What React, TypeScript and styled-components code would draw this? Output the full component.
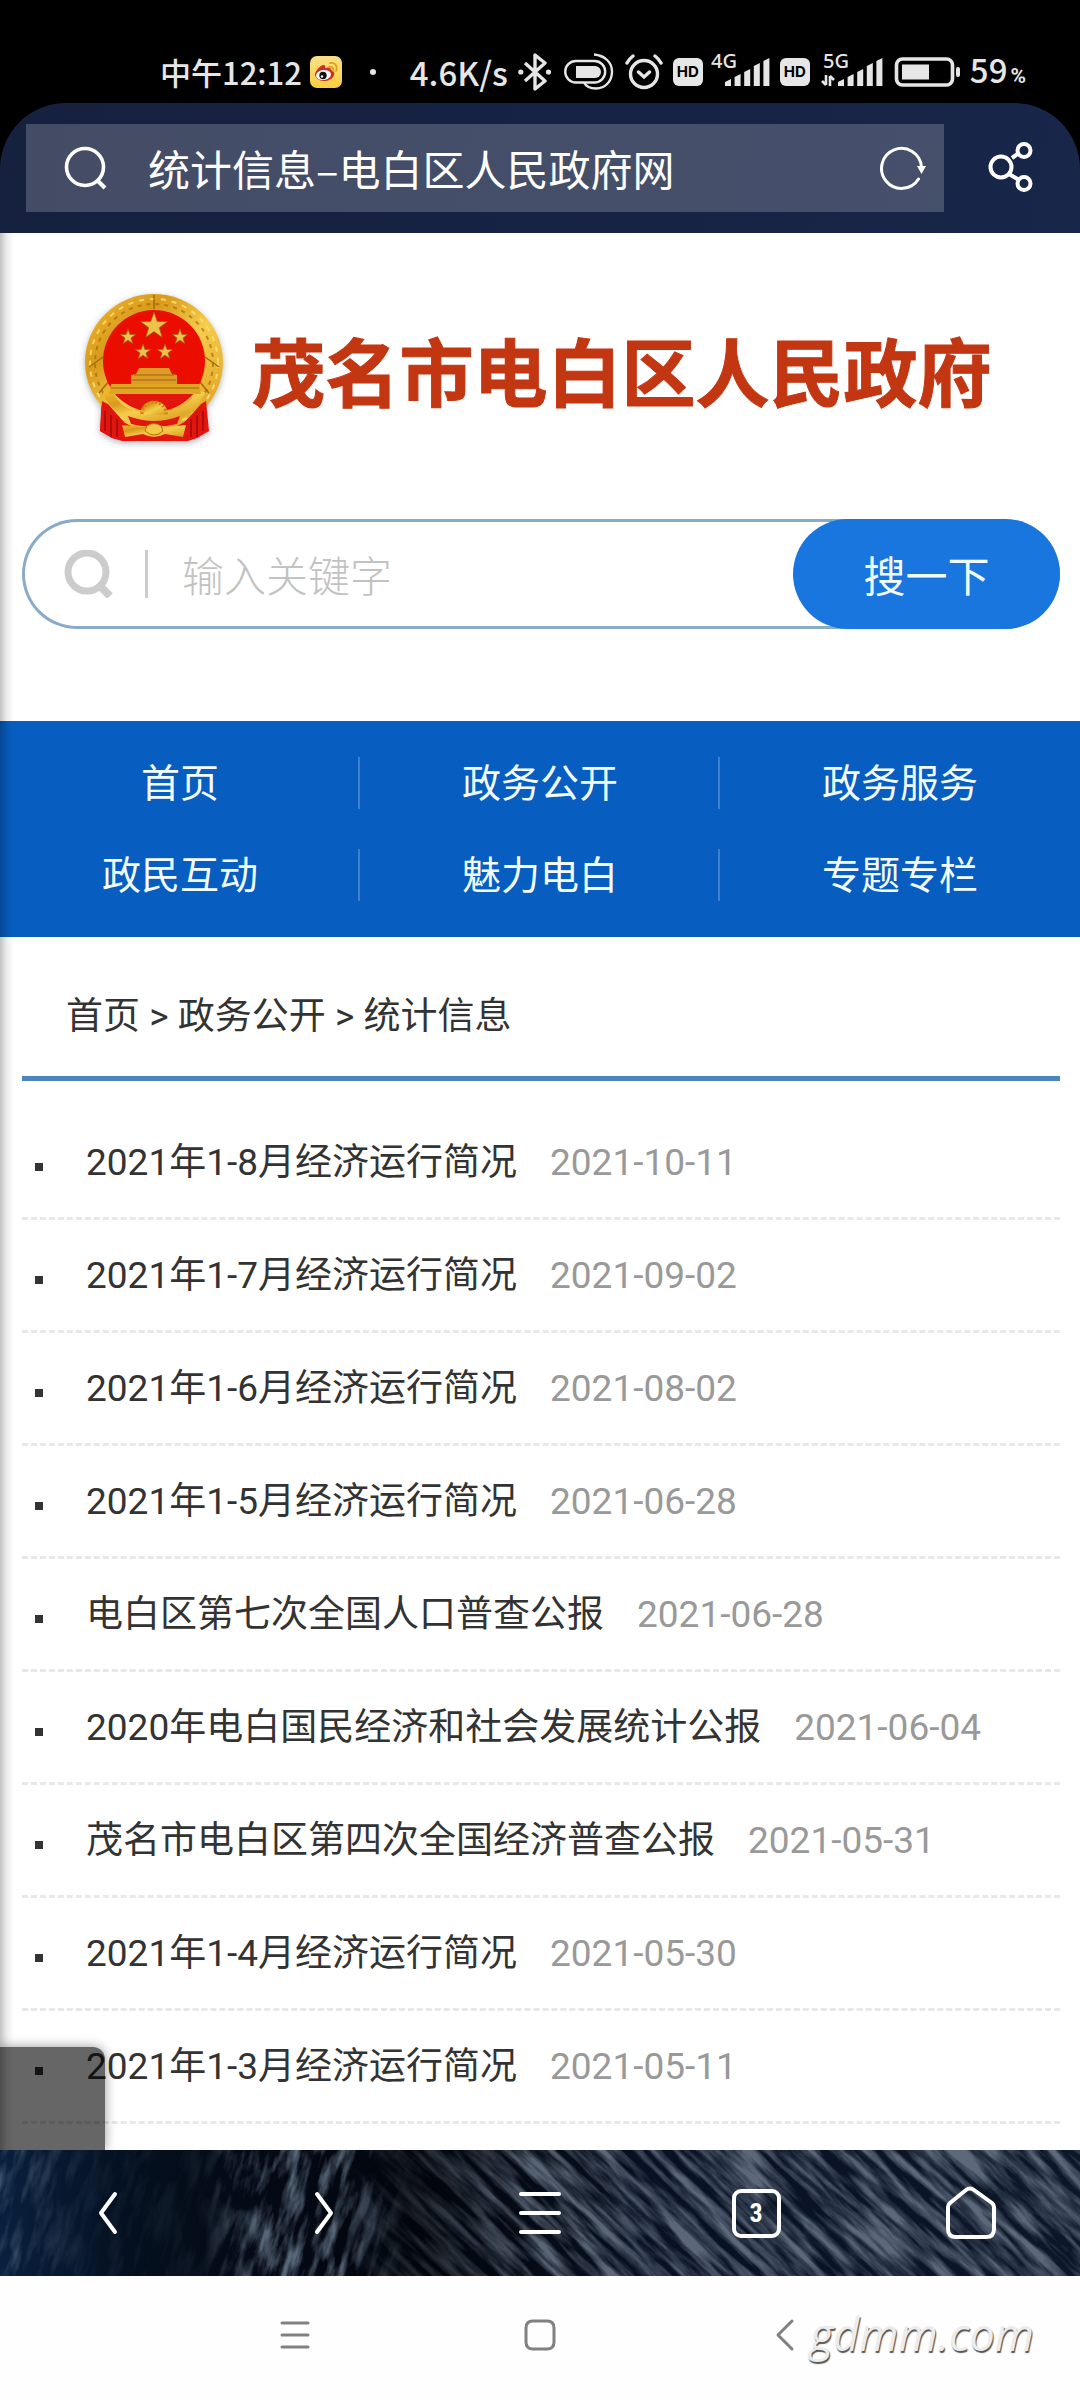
import React from "react";
import styled, { createGlobalStyle } from "styled-components";

const CJK = `"Noto Sans CJK SC", sans-serif`;
const MIXED = `Roboto, "Noto Sans CJK SC", sans-serif`;
const ICON = "#e6e6e6";

const GlobalStyle = createGlobalStyle`
  *, *::before, *::after { box-sizing: border-box; }
  body { margin: 0; background: #fff; font-family: ${MIXED}; }
  button, input { font: inherit; border: 0; margin: 0; padding: 0; background: none; color: inherit; }
  a { color: inherit; text-decoration: none; }
  svg { display: block; flex: none; }
`;

const Screen = styled.div`
  display: flex;
  flex-direction: column;
`;

/* ---------- status bar ---------- */

const StatusBar = styled.header`
  display: flex;
  align-items: center;
  justify-content: space-between;
  height: 103px;
  padding: 41px 54px 0 160px;
  background: #000;
  color: ${ICON};
  font-family: ${CJK};
  font-weight: 500;
  line-height: 60px;
`;

const StatusGroup = styled.div<{ $gap: number }>`
  display: flex;
  align-items: center;
  gap: ${(p) => p.$gap}px;
  white-space: nowrap;
`;

const Clock = styled.time`
  font-size: 31px;
`;

const Reading = styled.span`
  font-size: 33px;
`;

const Dot = styled.span`
  width: 6px;
  height: 6px;
  margin-left: 20px;
  border-radius: 50%;
  background: ${ICON};
`;

const HdBadge = styled.span`
  width: 30px;
  height: 28px;
  border-radius: 6px;
  background: ${ICON};
  color: #000;
  font-family: Inter, sans-serif;
  font-size: 15px;
  font-weight: 700;
  line-height: 28px;
  text-align: center;
`;

const Percent = styled.small`
  margin-left: 3px;
  font-family: Roboto, sans-serif;
  font-size: 21px;
  font-weight: 700;
`;

/* ---------- browser bar ---------- */

const BrowserTop = styled.div`
  background: #000;
`;

const AddressBar = styled.form`
  display: flex;
  align-items: center;
  height: 130px;
  padding-left: 26px;
  border-radius: 66px 66px 0 0;
  background: linear-gradient(100deg, #16203f, #172345 60%, #182649);
`;

const AddressField = styled.label`
  display: flex;
  flex: 1;
  align-items: center;
  height: 88px;
  padding: 0 17px 0 38px;
  background: rgba(255, 255, 255, 0.2);
`;

const AddressInput = styled.input`
  flex: 1;
  min-width: 0;
  padding-left: 40px;
  color: #fff;
  font-family: ${CJK};
  font-size: 42px;
  line-height: 60px;
`;

const IconButton = styled.button`
  display: flex;
  align-items: center;
  justify-content: center;
`;

const ShareButton = styled(IconButton)`
  width: 136px;
  height: 88px;
`;

/* ---------- web page ---------- */

const Site = styled.div`
  position: relative;
  padding-bottom: 26px;
  background: #fff;
  color: #333;

  &::after {
    content: "";
    position: absolute;
    inset: 0 auto 0 0;
    width: 14px;
    background: linear-gradient(90deg, rgba(0, 0, 0, 0.24), rgba(0, 0, 0, 0.07) 50%, transparent);
    pointer-events: none;
  }
`;

const Masthead = styled.div`
  display: flex;
  align-items: center;
  justify-content: center;
  gap: 21px;
  padding: 54px 12px 0 0;
`;

const SiteName = styled.h1`
  margin: 0;
  padding-top: 2px;
  color: #c33612;
  font-family: ${CJK};
  font-size: 74px;
  font-weight: 700;
  line-height: 100px;
  white-space: nowrap;
  -webkit-text-stroke: 1px #c33612;
`;

const SearchForm = styled.form`
  display: flex;
  height: 110px;
  margin: 70px 20px 92px 22px;
  border-radius: 55px;
  background: #fff;
  box-shadow: inset 0 0 0 3px #8aabc8;
`;

const SearchLabel = styled.label`
  display: flex;
  flex: 1;
  align-items: center;
  padding-left: 42px;
`;

const SearchInput = styled.input`
  flex: 1;
  min-width: 0;
  height: 48px;
  margin-left: 31px;
  padding: 0 0 2px 34px;
  border-left: 3px solid #ccc;
  color: #333;
  font-family: ${CJK};
  font-size: 42px;
  font-weight: 300;

  &::placeholder { color: #c2c2c2; opacity: 1; }
`;

const SearchButton = styled.button`
  width: 267px;
  padding-bottom: 2px;
  border-radius: 55px;
  background: #1976de;
  color: #f0fcff;
  font-family: ${CJK};
  font-size: 42px;
`;

const MainNav = styled.nav`
  display: grid;
  grid-template-columns: repeat(3, 1fr);
  padding: 16px 0;
  background: #075dc0;
`;

const NavLink = styled.a`
  padding: 21px 0 19px;
  color: #f2fcff;
  font-size: 39px;
  line-height: 52px;
  text-align: center;
  background: linear-gradient(#3c80cf, #3c80cf) right center / 2px 52px no-repeat;

  &:nth-child(3n) { background: none; }
`;

const Breadcrumb = styled.nav`
  margin: 0 20px 26px 22px;
  padding: 50px 0 29px 44px;
  border-bottom: 5px solid #4a85bb;
  font-size: 37px;
  line-height: 60px;
`;

const NewsList = styled.ul`
  margin: 0 20px 0 22px;
  padding: 0;
  list-style: none;
`;

const NewsItem = styled.li`
  display: flex;
  align-items: center;
  padding: 26px 0 24px 13px;
  border-bottom: 3px dashed #e8e8e8;
  font-size: 37px;
  line-height: 60px;
  white-space: nowrap;

  &::before {
    content: "";
    width: 8px;
    height: 8px;
    margin: 8px 43px 0 0;
    background: #333;
  }
`;

const NewsDate = styled.time`
  margin-left: 33px;
  color: #999;
`;

const FloatingTab = styled.div`
  position: absolute;
  left: 0;
  bottom: 0;
  width: 105px;
  height: 103px;
  border-radius: 0 12px 0 0;
  background: rgba(0, 0, 0, 0.6);
  box-shadow: 0 0 12px rgba(0, 0, 0, 0.4);
  clip-path: inset(-16px -16px 0 0);
`;

/* ---------- bottom bars ---------- */

const Toolbar = styled.nav`
  position: relative;
  display: grid;
  grid-template-columns: repeat(5, 1fr);
  height: 126px;
  overflow: hidden;
  background: #050d1a;
`;

const Backdrop = styled.svg`
  position: absolute;
  inset: 0;
  width: 100%;
  height: 100%;
`;

const ToolButton = styled(IconButton)`
  position: relative;
`;

const TabCount = styled.span`
  width: 49px;
  height: 49px;
  border: 4px solid #fff;
  border-radius: 9px;
  color: #fff;
  font-family: "Roboto Condensed", Roboto, sans-serif;
  font-size: 26px;
  font-weight: 700;
  line-height: 41px;
  text-align: center;
`;

const SystemBar = styled.nav`
  position: relative;
  display: grid;
  grid-template-columns: repeat(3, 1fr);
  height: 124px;
  padding: 0 16% 6px;
  background: #fefefe;
`;

const Watermark = styled.span`
  position: absolute;
  right: 46px;
  top: 28px;
  color: #ececec;
  font-family: "Open Sans", sans-serif;
  font-size: 45px;
  font-style: italic;
  line-height: 60px;
  text-shadow: 1px 2px 1px #555;
`;

/* ---------- drawings ---------- */

const starPoints = (cx: number, cy: number, r: number) =>
  Array.from({ length: 10 }, (_, i) => {
    const a = (-90 + i * 36) * (Math.PI / 180);
    const d = i % 2 ? r * 0.4 : r;
    return `${(cx + d * Math.cos(a)).toFixed(1)},${(cy + d * Math.sin(a)).toFixed(1)}`;
  }).join(" ");

const WeiboIcon = () => (
  <svg width="32" height="32" viewBox="0 0 32 32">
    <defs>
      <linearGradient id="wb" x1="0" y1="0" x2="0" y2="1">
        <stop offset="0" stopColor="#fbe08a" />
        <stop offset="1" stopColor="#f9cf3f" />
      </linearGradient>
    </defs>
    <rect width="32" height="32" rx="7" fill="url(#wb)" />
    <path d="M5 18c1-4 5-8 8-9 2 0 3 1 2 3 3-1 6-1 6 2 3 1 4 3 3 5-1 4-6 6-10 6-5 0-9-3-9-7z" fill="#cf2f22" />
    <ellipse cx="13.500" cy="19" rx="7.500" ry="5" fill="#fff" transform="rotate(-8 13.500 19)" />
    <circle cx="13" cy="19.500" r="3.700" fill="#111" />
    <circle cx="12" cy="20.500" r="1.200" fill="#fff" />
    <path d="M19 11c3-1 5 1 4 4M20 7c5-1 8 3 6 8" fill="none" stroke="#e0a01c" strokeWidth="1.800" strokeLinecap="round" />
  </svg>
);

const BluetoothIcon = () => (
  <svg width="36" height="38" viewBox="0 0 36 38" fill="none" stroke={ICON} strokeWidth="3.400" strokeLinejoin="round">
    <path d="M7 10l20 18-10 8V2l10 8L7 28" />
    <circle cx="2.800" cy="19" r="2.600" fill={ICON} stroke="none" />
    <circle cx="30.500" cy="19" r="2.600" fill={ICON} stroke="none" />
  </svg>
);

const CapsuleIcon = () => (
  <svg width="51" height="38" viewBox="0 0 51 38" fill="none" stroke={ICON} strokeWidth="2.400">
    <rect x="1.200" y="8" width="40" height="21.500" rx="10.700" />
    <path d="M12 13h19a6 6 0 0 1 0 12H12z" fill={ICON} stroke="none" />
    <path d="M30 1.500c11 1 18 8 18 17 0 10-7 17-16 17-6 0-10-2-12-6" />
  </svg>
);

const AlarmIcon = () => (
  <svg width="38" height="38" viewBox="0 0 38 38" fill="none" stroke={ICON} strokeWidth="3.400" strokeLinecap="round">
    <circle cx="19" cy="21" r="13.500" />
    <path d="M13.500 19l5.500 5 5.500-5M2 10q2-4 6-7M36 10q-2-4-6-7" />
  </svg>
);

const SignalBars = ({ x }: { x: number }) => (
  <g fill={ICON}>
    {[7, 12, 17, 23, 28].map((h, i) => (
      <path key={h} d={`M${x + i * 9.6} 33v-${h - 3}l6-3v${h}z`} />
    ))}
  </g>
);

const Signal4G = () => (
  <svg width="59" height="58" viewBox="0 -10 59 58">
    <text x="0" y="15" fill={ICON} fontFamily="Noto Sans, sans-serif" fontSize="20" fontWeight="500">4G</text>
    <SignalBars x={14} />
  </svg>
);

const Signal5G = () => (
  <svg width="66" height="58" viewBox="0 -10 66 58">
    <text x="5" y="15" fill={ICON} fontFamily="Noto Sans, sans-serif" fontSize="20" fontWeight="500">5G</text>
    <path d="M8 22v10M4 28l4 4M12 33V23M16 27l-4-4" fill="none" stroke={ICON} strokeWidth="2.600" />
    <SignalBars x={20} />
  </svg>
);

const BatteryIcon = () => (
  <svg width="66" height="30" viewBox="0 0 66 30">
    <rect x="2.500" y="2" width="56" height="26" rx="6" fill="none" stroke={ICON} strokeWidth="3.600" />
    <rect x="8" y="7.500" width="27" height="15" fill={ICON} />
    <rect x="62" y="10" width="4" height="10" rx="2" fill={ICON} />
  </svg>
);

const AddressSearchIcon = () => (
  <svg width="44" height="44" viewBox="0 0 44 44" fill="none" stroke="#fff" strokeWidth="3.600">
    <circle cx="21" cy="21" r="18.500" />
    <path d="M33 34l8 8" strokeWidth="4" />
  </svg>
);

const ReloadIcon = () => (
  <svg width="48" height="44" viewBox="0 0 48 44" fill="none" stroke="#fff" strokeWidth="3">
    <path d="M42.500 21A20 20 0 1 0 39.500 33" strokeLinecap="round" />
    <path d="M38 20h9l-4.500 8z" fill="#fff" stroke="none" />
  </svg>
);

const ShareIcon = () => (
  <svg width="48" height="52" viewBox="0 0 48 52" fill="none" stroke="#fff" strokeWidth="4">
    <circle cx="13" cy="25" r="10.500" />
    <circle cx="36" cy="8.500" r="6.500" />
    <circle cx="36" cy="41.500" r="6.500" />
    <path d="M24 16l7-5M21 32l10 6" />
  </svg>
);

const SearchIcon = () => (
  <svg width="50" height="48" viewBox="0 0 50 48" fill="none" stroke="#ccc">
    <circle cx="23" cy="22" r="19" strokeWidth="7" />
    <path d="M35 35l11 11" strokeWidth="8" />
  </svg>
);

const Emblem = () => (
  <svg width="154" height="162" viewBox="-8 -6 154 162" role="img" aria-label="国徽">
    <defs>
      <linearGradient id="gold" x1="0" y1="0" x2="1" y2="1">
        <stop offset="0" stopColor="#f2b92c" />
        <stop offset="0.300" stopColor="#d89a1c" />
        <stop offset="0.550" stopColor="#f6cd4c" />
        <stop offset="1" stopColor="#d9981a" />
      </linearGradient>
      <filter id="lift" x="-15%" y="-15%" width="130%" height="130%">
        <feDropShadow dx="0" dy="2" stdDeviation="3" floodColor="#456" floodOpacity="0.450" />
      </filter>
    </defs>
    <g filter="url(#lift)">
      <path d="M17 102l-2 36 12 7 10 3h66l9-3 11-8-3-35z" fill="#e3120c" />
      <ellipse cx="69" cy="69" rx="69" ry="68" fill="url(#gold)" />
      <circle cx="69" cy="70" r="59" fill="none" stroke="#a8690c" strokeWidth="2" strokeDasharray="4 5" opacity="0.700" />
      <circle cx="69" cy="70" r="64" fill="none" stroke="#fbe27c" strokeWidth="2" strokeDasharray="5 6" opacity="0.800" />
      <path d="M69 2v14M4 74l14-10M134 74l-14-10M14 100l10-12M124 100l-10-12" stroke="#a8690c" strokeWidth="1.500" />
      <circle cx="69" cy="68" r="51" fill="#ea0a05" />
      <path d="M17 108l-2 30 12 7 10 2 2-18-16-18zM121 108l3 30-12 7-10 2-2-18 16-18z" fill="#e3120c" />
      <path d="M22 113q22 28 47 22 25 6 47-22l2 6q-16 22-40 22h-18q-24 0-40-22z" fill="#dc1810" />
      <path d="M22 98q10 24 38 26h18q28-2 38-26" fill="none" stroke="url(#gold)" strokeWidth="9" />
      <path d="M30 101h78q-12 14-39 16-27-2-39-16z" fill="#e3120c" />
      <path d="M26 91h88l2 10H24z" fill="#e0a624" />
      <path d="M46 91v-9l5-1 3-6h30l3 6 5 1v9z" fill="#dc9c28" />
      <path d="M49 82h40M47 87h44M26 95h88" stroke="#9c6410" strokeWidth="1.200" />
      <path d="M55 122a14 14 0 0 1 28 0z" fill="url(#gold)" />
      <path d="M57 121a12 12 0 0 1 24 0" fill="none" stroke="#c9820f" strokeWidth="3" strokeDasharray="2 2" />
      <path d="M43 123q26 10 52 0l-3 8q-23 6-46 0z" fill="#e3120c" />
      <path d="M37 132l22 2q10-6 20 0l22-2-3 12-18-3q-11 6-22 0l-18 3z" fill="url(#gold)" />
      <path d="M62 133q7-5 14 0l2 5q-9 8-18 0z" fill="#f5c945" stroke="#b37410" />
      <path d="M20 118v20M26 122v22M32 126v18M118 118v20M112 122v22M106 126v18" stroke="#a90c08" strokeWidth="1.800" />
      <g fill="#eec14a" stroke="#a1660f" strokeWidth="0.800">
        <polygon points={starPoints(69, 33, 14)} />
        <polygon points={starPoints(43, 44, 8)} />
        <polygon points={starPoints(95, 44, 8)} />
        <polygon points={starPoints(58, 59, 8)} />
        <polygon points={starPoints(80, 59, 8)} />
      </g>
    </g>
  </svg>
);

const ToolbarBackdrop = () => (
  <Backdrop viewBox="0 0 1080 126" preserveAspectRatio="none" aria-hidden="true">
    <defs>
      <linearGradient id="sea">
        <stop offset="0" stopColor="#0a1f3e" />
        <stop offset="0.120" stopColor="#04101f" />
        <stop offset="0.250" stopColor="#040914" />
        <stop offset="0.400" stopColor="#02050c" />
        <stop offset="0.600" stopColor="#081122" />
        <stop offset="1" stopColor="#0c1728" />
      </linearGradient>
      <linearGradient id="fadeRight">
        <stop offset="0.320" stopColor="#000" />
        <stop offset="0.500" stopColor="#fff" />
      </linearGradient>
      <linearGradient id="fadeLeft">
        <stop offset="0" stopColor="#999" />
        <stop offset="0.080" stopColor="#222" />
        <stop offset="0.190" stopColor="#222" />
        <stop offset="0.240" stopColor="#fff" />
        <stop offset="0.310" stopColor="#fff" />
        <stop offset="0.380" stopColor="#000" />
      </linearGradient>
      <mask id="right"><rect width="1080" height="126" fill="url(#fadeRight)" /></mask>
      <mask id="left"><rect width="1080" height="126" fill="url(#fadeLeft)" /></mask>
      <filter id="streaks" x="0" y="0" width="100%" height="100%">
        <feTurbulence type="fractalNoise" baseFrequency="0.014 0.110" numOctaves="5" seed="8" />
        <feColorMatrix values="0 0 0 0 0.250  0 0 0 0 0.310  0 0 0 0 0.400  2.600 0 0 0 -0.900" />
      </filter>
      <filter id="ripples" x="0" y="0" width="100%" height="100%">
        <feTurbulence type="fractalNoise" baseFrequency="0.020 0.090" numOctaves="5" seed="3" />
        <feColorMatrix values="0 0 0 0 0.170  0 0 0 0 0.240  0 0 0 0 0.330  3.000 0 0 0 -1.250" />
      </filter>
    </defs>
    <rect width="1080" height="126" fill="url(#sea)" />
    <g mask="url(#right)">
      <rect x="-700" y="-700" width="1400" height="1400" transform="translate(760 60) rotate(44)" filter="url(#streaks)" opacity="0.650" />
    </g>
    <g mask="url(#left)">
      <rect x="-500" y="-500" width="1000" height="1000" transform="translate(240 60) rotate(106)" filter="url(#ripples)" opacity="0.750" />
    </g>
  </Backdrop>
);

const Stroke = ({ w, h, d, color = "#fff", width = 4 }: { w: number; h: number; d: string; color?: string; width?: number }) => (
  <svg width={w} height={h} viewBox={`0 0 ${w} ${h}`} fill="none" stroke={color} strokeWidth={width} strokeLinecap="round" strokeLinejoin="round">
    <path d={d} />
  </svg>
);

/* ---------- data ---------- */

const navLinks = ["首页", "政务公开", "政务服务", "政民互动", "魅力电白", "专题专栏"];

const news = [
  ["2021年1-8月经济运行简况", "2021-10-11"],
  ["2021年1-7月经济运行简况", "2021-09-02"],
  ["2021年1-6月经济运行简况", "2021-08-02"],
  ["2021年1-5月经济运行简况", "2021-06-28"],
  ["电白区第七次全国人口普查公报", "2021-06-28"],
  ["2020年电白国民经济和社会发展统计公报", "2021-06-04"],
  ["茂名市电白区第四次全国经济普查公报", "2021-05-31"],
  ["2021年1-4月经济运行简况", "2021-05-30"],
  ["2021年1-3月经济运行简况", "2021-05-11"],
];

export default function App() {
  return (
    <Screen>
      <GlobalStyle />
      <StatusBar>
        <StatusGroup $gap={8}>
          <Clock>中午12:12</Clock>
          <WeiboIcon />
          <Dot />
        </StatusGroup>
        <StatusGroup $gap={10}>
          <Reading>4.6K/s</Reading>
          <BluetoothIcon />
          <CapsuleIcon />
          <AlarmIcon />
          <StatusGroup $gap={8}>
            <HdBadge>HD</HdBadge>
            <Signal4G />
          </StatusGroup>
          <StatusGroup $gap={8}>
            <HdBadge>HD</HdBadge>
            <Signal5G />
          </StatusGroup>
          <BatteryIcon />
          <Reading>
            59<Percent>%</Percent>
          </Reading>
        </StatusGroup>
      </StatusBar>

      <BrowserTop>
        <AddressBar onSubmit={(e) => e.preventDefault()}>
          <AddressField>
            <AddressSearchIcon />
            <AddressInput aria-label="地址栏" defaultValue="统计信息–电白区人民政府网" />
            <IconButton type="button" aria-label="刷新">
              <ReloadIcon />
            </IconButton>
          </AddressField>
          <ShareButton type="button" aria-label="分享">
            <ShareIcon />
          </ShareButton>
        </AddressBar>
      </BrowserTop>

      <Site>
        <Masthead>
          <Emblem />
          <SiteName>茂名市电白区人民政府</SiteName>
        </Masthead>
        <SearchForm onSubmit={(e) => e.preventDefault()}>
          <SearchLabel>
            <SearchIcon />
            <SearchInput type="text" placeholder="输入关键字" aria-label="输入关键字" />
          </SearchLabel>
          <SearchButton type="submit">搜一下</SearchButton>
        </SearchForm>
        <MainNav>
          {navLinks.map((label) => (
            <NavLink key={label} href="#">{label}</NavLink>
          ))}
        </MainNav>
        <Breadcrumb>
          <a href="#">首页</a> &gt; <a href="#">政务公开</a> &gt; <a href="#">统计信息</a>
        </Breadcrumb>
        <NewsList>
          {news.map(([title, date]) => (
            <NewsItem key={title}>
              <a href="#">{title}</a>
              <NewsDate dateTime={date}>{date}</NewsDate>
            </NewsItem>
          ))}
        </NewsList>
        <FloatingTab />
      </Site>

      <Toolbar>
        <ToolbarBackdrop />
        <ToolButton aria-label="后退">
          <Stroke w={20} h={44} d="M17 3L3 22l14 19" />
        </ToolButton>
        <ToolButton aria-label="前进">
          <Stroke w={20} h={44} d="M3 3l14 19L3 41" />
        </ToolButton>
        <ToolButton aria-label="菜单">
          <Stroke w={44} h={44} d="M3 3h38M3 22h38M3 41h38" />
        </ToolButton>
        <ToolButton aria-label="标签页">
          <TabCount>3</TabCount>
        </ToolButton>
        <ToolButton aria-label="主页">
          <Stroke w={54} h={54} d="M21 4q4-3 8 0l18 13q2 2 2 4v22q0 8-8 8H11q-8 0-8-8V21q0-2 2-4z" />
        </ToolButton>
      </Toolbar>

      <SystemBar>
        <IconButton aria-label="最近任务">
          <Stroke w={32} h={30} d="M3 3h26M3 15h26M3 27h26" color="#808080" width={3} />
        </IconButton>
        <IconButton aria-label="桌面">
          <Stroke w={34} h={34} d="M10 3h14q7 0 7 7v14q0 7-7 7H10q-7 0-7-7V10q0-7 7-7z" color="#808080" width={3} />
        </IconButton>
        <IconButton aria-label="返回">
          <Stroke w={20} h={34} d="M17 3L3 17l14 14" color="#808080" width={3} />
        </IconButton>
        <Watermark>gdmm.com</Watermark>
      </SystemBar>
    </Screen>
  );
}
